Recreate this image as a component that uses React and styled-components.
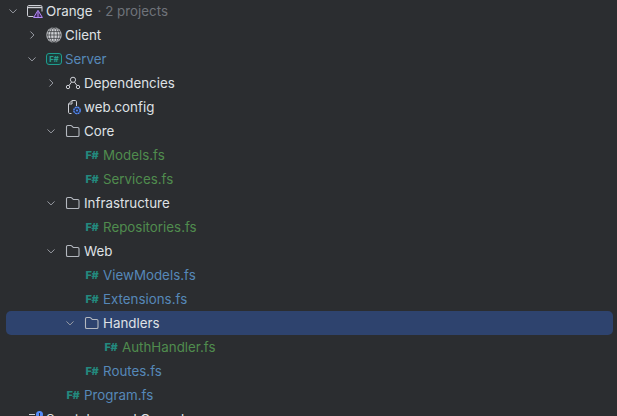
import React from 'react';
import styled, { createGlobalStyle } from 'styled-components';

const GlobalStyle = createGlobalStyle`
  html, body {
    margin: 0;
    height: 100%;
    overflow: hidden;
    background: #2b2d30;
  }
`;

const Tree = styled.div`
  height: 416px;
  overflow: hidden;
  background: #2b2d30;
  font-family: Inter, "Noto Sans", sans-serif;
  font-size: 13.35px;
  color: #dfe1e5;
`;

const Rows = styled.ul`
  list-style: none;
  margin: -1px 4px 0 6px;
  padding: 0;
`;

const Row = styled.li`
  display: flex;
  align-items: center;
  height: 24px;
  padding-left: ${(p) => p.$depth * 19}px;
  border-radius: 5px;
  background: ${(p) => (p.$selected ? '#2e436e' : 'transparent')};
`;

const Toggle = styled.span`
  display: flex;
  align-items: center;
  justify-content: center;
  width: 14px;
  height: 16px;
  margin-right: 7px;
  flex: none;
`;

const IconSlot = styled.span`
  display: flex;
  align-items: center;
  justify-content: center;
  width: 16px;
  height: 16px;
  margin-right: 3px;
  flex: none;
`;

const FSharp = styled.span`
  font-size: 11px;
  font-weight: 800;
  line-height: 16px;
  letter-spacing: -0.2px;
  color: #23897e;
`;

const ProjectBadge = styled.span`
  display: flex;
  align-items: center;
  justify-content: center;
  width: 16px;
  height: 12px;
  box-sizing: border-box;
  border: 1px solid #1f9c8e;
  border-radius: 3px;
  background: #1d3d3b;
  font-size: 7.5px;
  font-weight: 800;
  color: #2a9d8f;
`;

const Label = styled.span`
  white-space: nowrap;
  color: ${(p) => p.$color || '#dfe1e5'};
`;

const Hint = styled.span`
  margin-left: 5px;
  white-space: nowrap;
  color: #6f737a;
`;

const Chevron = ({ open }) => (
  <svg width="16" height="16" viewBox="0 0 16 16" fill="none" stroke="#9da0a8" strokeWidth="1.1">
    {open ? <path d="M4 6.2l4 4 4-4" /> : <path d="M6.2 4l4 4-4 4" />}
  </svg>
);

const Folder = () => (
  <svg width="16" height="16" viewBox="0 0 16 16" fill="none" stroke="#b4b8bf" strokeWidth="1.1">
    <path d="M1.5 3.8c0-.7.5-1.3 1.3-1.3h3.1c.3 0 .6.1.8.3l1.5 1.5c.2.2.5.2.8.2h3.7c.7 0 1.3.6 1.3 1.3v6.4c0 .7-.6 1.3-1.3 1.3H2.8c-.8 0-1.3-.6-1.3-1.3z" />
  </svg>
);

const SolutionIcon = () => (
  <svg width="16" height="16" viewBox="0 0 16 16" fill="none">
    <path d="M6.5 13.5H1.7c-.7 0-1.2-.5-1.2-1.2V3.7c0-.7.5-1.2 1.2-1.2h12.1c.7 0 1.2.5 1.2 1.2v4.8" stroke="#ced0d6" />
    <path d="M1 4.5h14" stroke="#ced0d6" strokeWidth="1.4" />
    <path d="M11 7.3l4.4 7.2H6.6z" fill="#43295f" stroke="#b189f5" />
    <path d="M11 8.5v6" stroke="#b189f5" />
  </svg>
);

const Globe = () => (
  <svg width="16" height="16" viewBox="0 0 16 16" fill="none">
    <circle cx="8" cy="8" r="7.7" fill="#d0d2d6" />
    <g stroke="#3f4145" strokeWidth="0.8">
      <ellipse cx="8" cy="8" rx="3.4" ry="7.6" />
      <ellipse cx="8" cy="8" rx="6.2" ry="7.6" />
      <path d="M8 .5v15M.5 8h15M1.5 4.6h13M1.5 11.4h13" />
    </g>
  </svg>
);

const Dependencies = () => (
  <svg width="16" height="16" viewBox="0 0 16 16" fill="none" stroke="#ced0d6">
    <circle cx="8" cy="4.8" r="2.6" />
    <circle cx="3" cy="12" r="1.7" />
    <circle cx="13" cy="12" r="1.7" />
    <path d="M6.6 7L4 10.6M9.4 7L12 10.6" />
  </svg>
);

const ConfigFile = () => (
  <svg width="16" height="16" viewBox="0 0 16 16" fill="none">
    <path d="M6.5 14.5H4.7c-.7 0-1.2-.5-1.2-1.2V5L7 1.5h3.3c.7 0 1.2.5 1.2 1.2V7" stroke="#ced0d6" />
    <path d="M7 1.5V5H3.5" stroke="#ced0d6" />
    <circle cx="12" cy="11.5" r="3.2" fill="#25324d" stroke="#548af7" strokeWidth="1.4" strokeDasharray="2 0.5" />
    <circle cx="12" cy="11.5" r="1" fill="#548af7" />
  </svg>
);

const ScratchesIcon = () => (
  <svg width="16" height="16" viewBox="0 0 16 16" fill="none">
    <path d="M2 3.5h6" stroke="#ced0d6" />
    <circle cx="12.5" cy="3.5" r="3.5" fill="#548af7" />
    <path d="M12.5 2v3" stroke="#2b2d30" />
  </svg>
);

const BLUE = '#5688b8';
const GREEN = '#508c4e';

const iconFor = {
  solution: <SolutionIcon />,
  globe: <Globe />,
  project: <ProjectBadge>F#</ProjectBadge>,
  deps: <Dependencies />,
  config: <ConfigFile />,
  folder: <Folder />,
  fs: <FSharp>F#</FSharp>,
  scratches: <ScratchesIcon />,
};

const items = [
  { depth: 0, toggle: 'open', icon: 'solution', label: 'Orange', hint: '· 2 projects' },
  { depth: 1, toggle: 'closed', icon: 'globe', label: 'Client' },
  { depth: 1, toggle: 'open', icon: 'project', label: 'Server', color: BLUE },
  { depth: 2, toggle: 'closed', icon: 'deps', label: 'Dependencies' },
  { depth: 2, icon: 'config', label: 'web.config' },
  { depth: 2, toggle: 'open', icon: 'folder', label: 'Core' },
  { depth: 3, icon: 'fs', label: 'Models.fs', color: GREEN },
  { depth: 3, icon: 'fs', label: 'Services.fs', color: GREEN },
  { depth: 2, toggle: 'open', icon: 'folder', label: 'Infrastructure' },
  { depth: 3, icon: 'fs', label: 'Repositories.fs', color: GREEN },
  { depth: 2, toggle: 'open', icon: 'folder', label: 'Web' },
  { depth: 3, icon: 'fs', label: 'ViewModels.fs', color: BLUE },
  { depth: 3, icon: 'fs', label: 'Extensions.fs', color: BLUE },
  { depth: 3, toggle: 'open', icon: 'folder', label: 'Handlers', selected: true },
  { depth: 4, icon: 'fs', label: 'AuthHandler.fs', color: GREEN },
  { depth: 3, icon: 'fs', label: 'Routes.fs', color: BLUE },
  { depth: 2, icon: 'fs', label: 'Program.fs', color: BLUE },
  { depth: 0, icon: 'scratches', label: 'Scratches and Consoles' },
];

const App = () => (
  <Tree>
    <GlobalStyle />
    <Rows>
      {items.map((item) => (
        <Row key={item.label} $depth={item.depth} $selected={item.selected}>
          <Toggle>{item.toggle && <Chevron open={item.toggle === 'open'} />}</Toggle>
          <IconSlot>{iconFor[item.icon]}</IconSlot>
          <Label $color={item.color}>{item.label}</Label>
          {item.hint && <Hint>{item.hint}</Hint>}
        </Row>
      ))}
    </Rows>
  </Tree>
);

export default App;
